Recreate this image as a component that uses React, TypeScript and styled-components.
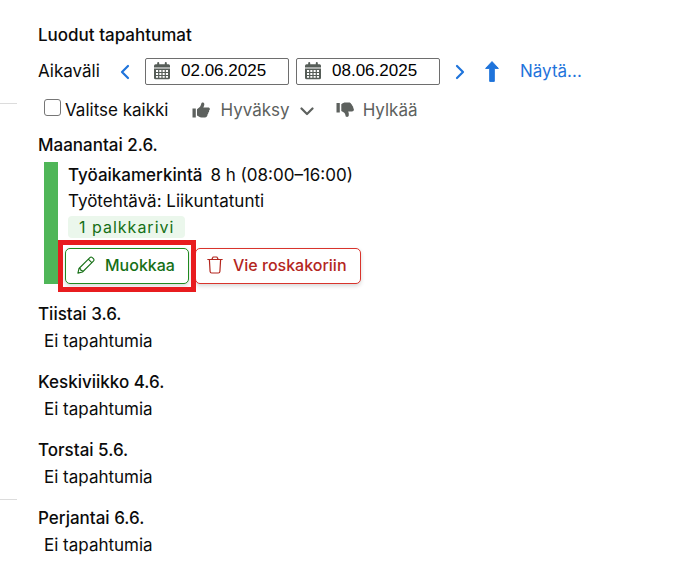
import React from "react";
import styled, { createGlobalStyle } from "styled-components";

const GlobalStyle = createGlobalStyle`
  * { box-sizing: border-box; }
  body {
    margin: 0;
    background: #fff;
    color: #0b0b0b;
    font-family: Inter, "Liberation Sans", sans-serif;
    font-size: 17px;
    line-height: 27px;
  }
  button, input { font: inherit; }
`;

const Page = styled.div`
  display: grid;
  grid-template-columns: 17px minmax(0, 1fr);
  column-gap: 21px;
`;

const Gutter = styled.div`
  display: flex;
  flex-direction: column;
  gap: 395px;
  padding-top: 103px;
`;

const GutterLine = styled.hr`
  width: 100%;
  height: 1px;
  margin: 0;
  border: 0;
  background: #dcdcdc;
`;

const Main = styled.main`
  padding: 22px 0 16px;
`;

const Title = styled.h2`
  margin: 0;
  font-size: 17px;
  font-weight: 500;
`;

const RangeRow = styled.div`
  display: flex;
  align-items: center;
  margin-top: 9px;
`;

const RangeLabel = styled.span`
  width: 81px;
`;

const PlainButton = styled.button<{ $color: string; $gap?: number }>`
  display: inline-flex;
  align-items: center;
  gap: ${(p) => p.$gap ?? 0}px;
  padding: 0;
  border: 0;
  background: none;
  color: ${(p) => p.$color};
  cursor: pointer;
`;

const RangeStep = styled(PlainButton)`
  justify-content: center;
  width: 12px;
`;

const DateFields = styled.div`
  display: flex;
  gap: 7px;
  margin: 0 14px;
`;

const DateField = styled.label`
  display: flex;
  align-items: center;
  gap: 11px;
  width: 144px;
  height: 27px;
  padding: 0 0 2px 8px;
  border: 1px solid #6e6e6e;
  border-radius: 2px;
  color: #565d58;
`;

const DateInput = styled.input`
  flex: 1;
  min-width: 0;
  padding: 0;
  border: 0;
  outline: 0;
  background: none;
  color: #000;
  font-family: "Liberation Sans", Arial, sans-serif;
  line-height: 24px;
`;

const UpButton = styled(PlainButton)`
  margin: 0 21px 0 19px;
`;

const ActionRow = styled.div`
  display: flex;
  align-items: center;
  gap: 22px;
  margin: 12px 0 8px 6px;
`;

const SelectAll = styled.label`
  display: flex;
  align-items: center;
  gap: 4px;
  padding-right: 2px;
`;

const Checkbox = styled.input`
  appearance: none;
  width: 17px;
  height: 17px;
  margin: 0 0 6px;
  border: 1px solid #767676;
  border-radius: 3px;
  background: #fff;
  &:checked { background: #1f74db; }
`;

const Day = styled.section`
  margin-bottom: 14px;
`;

const Empty = styled.p`
  margin: 0 0 0 6px;
`;

const Entry = styled.article`
  margin: 3px 0 17px 6px;
  padding-left: 7px;
  border-left: 14px solid #4fb658;
  line-height: 26px;
`;

const EntryText = styled.p`
  margin: 0;
  padding-left: 3px;
`;

const EntryName = styled.strong`
  margin-right: 8px;
  font-weight: 500;
`;

const Badge = styled.span`
  display: block;
  width: fit-content;
  margin: 2px 0 10px 3px;
  padding: 0 11px;
  border-radius: 4px;
  background: #ebf7ec;
  color: #167016;
  font-size: 16px;
  line-height: 22px;
  letter-spacing: 1px;
`;

const EntryActions = styled.div`
  display: flex;
  gap: 6px;
`;

const OutlineButton = styled.button<{ $line: string; $color: string }>`
  display: inline-flex;
  align-items: center;
  gap: 10px;
  height: 36px;
  padding: 0 13px 2px 11px;
  border: 1px solid ${(p) => p.$line};
  border-radius: 5px;
  background: #fff;
  box-shadow: 0 2px 4px rgba(0, 0, 0, 0.16);
  color: ${(p) => p.$color};
  font-size: 16px;
  font-weight: 500;
  white-space: nowrap;
  cursor: pointer;
`;

const Highlighted = styled.div`
  position: relative;
  display: flex;
  &::after {
    content: "";
    position: absolute;
    inset: -8px -7px;
    border: 5px solid #e81c1f;
    pointer-events: none;
    z-index: 1;
  }
`;

const Chevron = ({ d, w, h }: { d: string; w: number; h: number }) => (
  <svg width={w} height={h} viewBox={`0 0 ${w} ${h}`} fill="none" stroke="currentColor" strokeWidth="2.2" strokeLinecap="round" strokeLinejoin="round" aria-hidden="true">
    <path d={d} />
  </svg>
);

const CalendarIcon = () => (
  <svg width="16" height="18" viewBox="0 0 16 18" fill="none" aria-hidden="true">
    <path fill="currentColor" d="M3.2 1a1 1 0 0 1 2 0v1.3h5.6V1a1 1 0 0 1 2 0v1.3h1.4A1.6 1.6 0 0 1 16 3.9V5.4H0V3.9a1.6 1.6 0 0 1 1.6-1.6h1.6zM0 6.4h16v9.3a1.6 1.6 0 0 1-1.6 1.6H1.6A1.6 1.6 0 0 1 0 15.7z" />
    <path fill="#fff" d="M2 8.1h2.1v2H2zM5.3 8.1h2.1v2H5.3zM8.6 8.1h2.1v2H8.6zM11.9 8.1H14v2h-2.1zM2 11.1h2.1v1.8H2zM5.3 11.1h2.1v1.8H5.3zM8.6 11.1h2.1v1.8H8.6zM11.9 11.1H14v1.8h-2.1zM2 13.9h2.1v1.8H2zM5.3 13.9h2.1v1.8H5.3zM8.6 13.9h2.1v1.8H8.6zM11.9 13.9H14v1.8h-2.1z" />
  </svg>
);

const ThumbUpIcon = () => (
  <svg width="18" height="18" viewBox="0 0 18 18" fill="currentColor" aria-hidden="true">
    <path d="M.5 6.400h3.300v9H.5zM5 7.200 7.500 5.300C8.600 4.300 9 3 9.300 1.600c.2-.9 1-1.300 1.700-1.100 1 .3 1.500 1.200 1.300 2.200-.2 1-.5 1.900-1 2.800h4.900c1 0 1.700.7 1.700 1.500 0 .7-.4 1.200-.9 1.400.3.9.1 1.700-.7 2.200.1.900-.2 1.500-.8 1.900 0 1.700-.9 2.900-2.600 2.900H9.500c-1 0-1.900-.3-2.700-.9L5 13.400z" />
  </svg>
);

const ThumbDownIcon = () => (
  <svg width="18" height="18" viewBox="0 0 18 18" fill="currentColor" aria-hidden="true">
    <path d="M.5 1h3.300v9.600H.5zM5.300 2.200C6.500 1 8 .5 9.500.5h3.300c1.300 0 2.200.6 2.500 1.700.8.300 1.100 1 1 1.800.8.400 1.100 1.100.9 1.900.5.5.7 1 .7 1.700 0 1.200-.8 2-1.900 2h-3.800c.5 1.200.8 2.500.6 3.700-.2 1.300-1.300 2-2.500 1.500-.6-.2-.7-.8-.8-1.400-.2-1.500-.9-2.500-2-3.200L5.300 8.900z" />
  </svg>
);

const ArrowUpIcon = () => (
  <svg width="14" height="21" viewBox="0 0 14 21" fill="currentColor" stroke="currentColor" strokeWidth="1" strokeLinejoin="round" aria-hidden="true">
    <path d="M7 .6 13.400 7.400H9.300v13H4.700v-13H.6z" />
  </svg>
);

const PencilIcon = () => (
  <svg width="18" height="18" viewBox="0 0 18 18" fill="none" stroke="currentColor" strokeWidth="1.100" strokeLinejoin="round" strokeLinecap="round" aria-hidden="true">
    <path d="M.9 17.100 2 12.500 12.900 1.600a1.700 1.700 0 0 1 2.400 0l1.100 1.100a1.700 1.700 0 0 1 0 2.400L5.500 16zM11.300 3.200l3.500 3.500M2 12.500l1.600.3.300 1.600 1.600.3" />
  </svg>
);

const TrashIcon = () => (
  <svg width="16" height="18" viewBox="0 0 16 18" fill="none" stroke="currentColor" strokeWidth="1.200" strokeLinecap="round" strokeLinejoin="round" aria-hidden="true">
    <path d="M.8 3.500h14.400M5 3.300l.6-1.600a1 1 0 0 1 .9-.7h3a1 1 0 0 1 .9.700l.6 1.600M2.400 3.700l.7 11.800a1.600 1.600 0 0 0 1.600 1.500h6.600a1.600 1.600 0 0 0 1.600-1.500l.7-11.800" />
  </svg>
);

const blue = "#1f74db";
const gray = "#5d615e";
const emptyDays = ["Tiistai 3.6.", "Keskiviikko 4.6.", "Torstai 5.6.", "Perjantai 6.6."];

export default function App() {
  return (
    <>
      <GlobalStyle />
      <Page>
        <Gutter>
          <GutterLine />
          <GutterLine />
        </Gutter>
        <Main>
          <Title>Luodut tapahtumat</Title>
          <RangeRow>
            <RangeLabel>Aikaväli</RangeLabel>
            <RangeStep $color={blue} aria-label="Edellinen">
              <Chevron w={10} h={16} d="M8 2 2 8l6 6" />
            </RangeStep>
            <DateFields>
              <DateField>
                <CalendarIcon />
                <DateInput aria-label="Alkaen" defaultValue="02.06.2025" />
              </DateField>
              <DateField>
                <CalendarIcon />
                <DateInput aria-label="Päättyen" defaultValue="08.06.2025" />
              </DateField>
            </DateFields>
            <RangeStep $color={blue} aria-label="Seuraava">
              <Chevron w={10} h={16} d="M2 2l6 6-6 6" />
            </RangeStep>
            <UpButton $color={blue} aria-label="Ylös">
              <ArrowUpIcon />
            </UpButton>
            <PlainButton $color={blue}>Näytä...</PlainButton>
          </RangeRow>
          <ActionRow>
            <SelectAll>
              <Checkbox type="checkbox" />
              Valitse kaikki
            </SelectAll>
            <PlainButton $color={gray} $gap={10}>
              <ThumbUpIcon />
              Hyväksy
              <Chevron w={14} h={10} d="M1.500 2.500 7 8l5.500-5.500" />
            </PlainButton>
            <PlainButton $color={gray} $gap={9}>
              <ThumbDownIcon />
              Hylkää
            </PlainButton>
          </ActionRow>
          <section>
            <Title as="h3">Maanantai 2.6.</Title>
            <Entry>
              <EntryText>
                <EntryName>Työaikamerkintä</EntryName>8 h (08:00–16:00)
              </EntryText>
              <EntryText>Työtehtävä: Liikuntatunti</EntryText>
              <Badge>1 palkkarivi</Badge>
              <EntryActions>
                <Highlighted>
                  <OutlineButton $line="#1f8a1f" $color="#167016">
                    <PencilIcon />
                    Muokkaa
                  </OutlineButton>
                </Highlighted>
                <OutlineButton $line="#d8342c" $color="#b3261e">
                  <TrashIcon />
                  Vie roskakoriin
                </OutlineButton>
              </EntryActions>
            </Entry>
          </section>
          {emptyDays.map((day) => (
            <Day key={day}>
              <Title as="h3">{day}</Title>
              <Empty>Ei tapahtumia</Empty>
            </Day>
          ))}
        </Main>
      </Page>
    </>
  );
}
